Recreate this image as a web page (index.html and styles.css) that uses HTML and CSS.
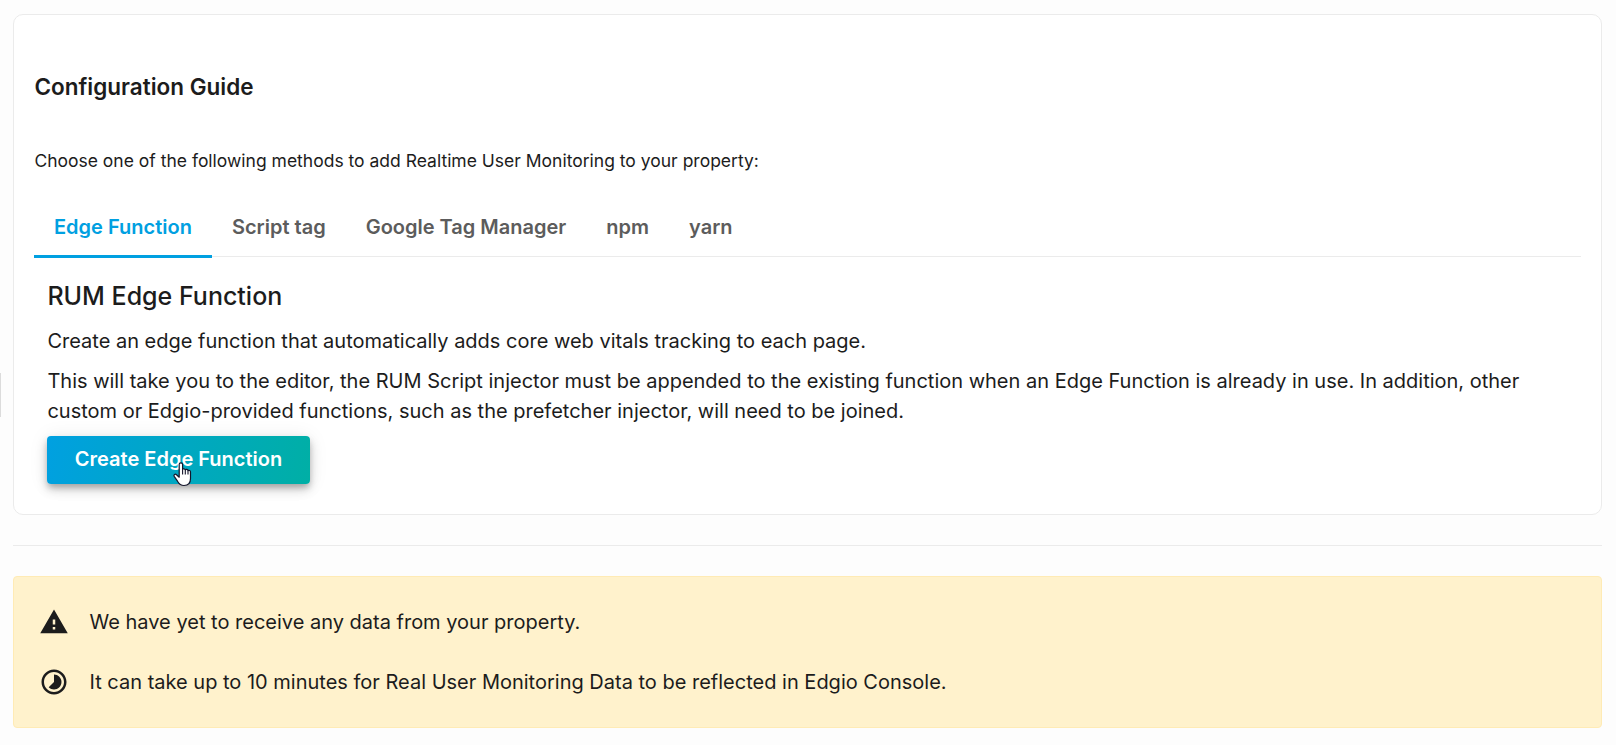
FILE: index.html
```html
<!DOCTYPE html>
<html lang="en">
<head>
<meta charset="utf-8">
<title>Configuration Guide</title>
<link rel="stylesheet" href="styles.css">
</head>
<body>
<span class="drawer-handle"></span>
<main class="page">
  <section class="card">
    <h2 class="card-title"><span>Configuration Guide</span></h2>
    <p class="card-intro"><span>Choose one of the following methods to add Realtime User Monitoring to your property:</span></p>
    <nav class="tabs">
      <a class="tab tab-active"><span>Edge Function</span></a>
      <a class="tab"><span>Script tag</span></a>
      <a class="tab"><span>Google Tag Manager</span></a>
      <a class="tab"><span>npm</span></a>
      <a class="tab"><span>yarn</span></a>
    </nav>
    <div class="panel">
      <h3 class="panel-title"><span>RUM Edge Function</span></h3>
      <p class="text"><span>Create an edge function that automatically adds core web vitals tracking to each page.</span></p>
      <p class="text"><span>This will take you to the editor, the RUM Script injector must be appended to the existing function when an Edge Function is already in use. In addition, other<br>custom or Edgio-provided functions, such as the prefetcher injector, will need to be joined.</span></p>
      <button class="button"><span>Create Edge Function</span>
        <svg class="cursor" width="19" height="25" viewBox="0 0 19 25"><path d="M6.2 12.6V2.6a1.7 1.7 0 0 1 3.4 0V7.4c.3-.8 2.4-.8 2.7.5c.6-.8 2.5-.6 2.7.7c.8-.6 2.5-.2 2.5 1.4V16.500c0 4-2 7-6.500 7c-3.500 0-5-1.600-6.500-4.300L1.200 14.300c-.8-1.500 1-2.700 2.300-1.600L6.200 15.200z" fill="#fff" stroke="#15152b" stroke-width="1.2" stroke-linejoin="round"/><path d="M9.600 7.500V12.500M12.300 8V12.500M15 8.700V12.500" fill="none" stroke="#15152b" stroke-width="1.100"/></svg>
      </button>
    </div>
  </section>
  <hr class="divider">
  <section class="alert">
    <div class="alert-row">
      <svg class="icon" viewBox="0 0 24 24"><path d="M1 21h22L12 2 1 21zm12-3h-2v-2h2v2zm0-4h-2v-4h2v4z"/></svg>
      <p class="alert-text"><span>We have yet to receive any data from your property.</span></p>
    </div>
    <div class="alert-row">
      <svg class="icon" viewBox="0 0 24 24"><path d="M16.240 7.760C15.070 6.590 13.540 6 12 6v6l-4.240 4.240c2.340 2.340 6.140 2.340 8.490 0 2.340-2.340 2.340-6.140-.01-8.480zM12 2C6.480 2 2 6.480 2 12s4.480 10 10 10 10-4.480 10-10S17.520 2 12 2zm0 18c-4.420 0-8-3.580-8-8s3.580-8 8-8 8 3.580 8 8-3.580 8-8 8z"/></svg>
      <p class="alert-text"><span>It can take up to 10 minutes for Real User Monitoring Data to be reflected in Edgio Console.</span></p>
    </div>
  </section>
</main>
</body>
</html>
```
FILE: styles.css
```css
* { box-sizing: border-box; }
body {
  margin: 0;
  background: #fdfdfd;
  color: #1c1c1c;
  font-family: Inter, "Liberation Sans", sans-serif;
}
h2, h3, p { margin: 0; }
.drawer-handle {
  position: absolute;
  left: 0;
  top: 373px;
  width: 1px;
  height: 44px;
  background: #dcdcdc;
}
.page { padding: 14px 14px 17px 13px; }
.card {
  height: 501px;
  padding: 57px 20px 0;
  background: #fff;
  border: 1px solid #ebebeb;
  border-radius: 10px;
}
.card-title {
  padding-left: 0.4px;
  font-size: 22.5px;
  line-height: 30px;
  font-weight: 600;
}
.card-intro {
  margin-top: 47px;
  padding-left: 0.4px;
  font-size: 17.5px;
  line-height: 24px;
  font-weight: 400;
}
.tabs {
  display: flex;
  height: 84px;
  border-bottom: 1px solid #ebebeb;
}
.tab {
  display: flex;
  align-items: flex-end;
  padding: 0 20px 17px;
  height: 85px;
  color: #5c5c5c;
  font-size: 20px;
  line-height: 28px;
  font-weight: 600;
}
.tab-active {
  color: #00a0e1;
  border-bottom: 3px solid #00a0e1;
  padding-bottom: 14px;
}
.panel { padding: 19px 13px 0; }
.panel-title {
  margin-bottom: 10px;
  padding-left: 0.4px;
  font-size: 25px;
  line-height: 40px;
  font-weight: 500;
}
.text {
  margin-bottom: 10px;
  padding-left: 0.4px;
  font-size: 20px;
  line-height: 30px;
  font-weight: 400;
}
.button {
  position: relative;
  display: block;
  width: 263px;
  height: 48px;
  padding: 0 0 2px;
  border: 0;
  border-radius: 4px;
  background: linear-gradient(102deg, #00a0e1, #00afa5);
  box-shadow: 0 4px 6px -1px rgba(0, 0, 0, 0.25), 0 6px 12px rgba(0, 0, 0, 0.14), 0 1px 20px rgba(0, 0, 0, 0.08);
  color: #fff;
  font: 600 20px/28px Inter, sans-serif;
}
.cursor { position: absolute; left: 126px; top: 26px; }
.divider {
  height: 1px;
  margin: 30px 0;
  border: 0;
  background: #ebebeb;
}
.alert {
  height: 152px;
  padding: 30px 26px;
  background: #fff2cc;
  border: 1px solid #ffebb5;
  border-radius: 4px;
}
.alert-row {
  display: flex;
  align-items: center;
  gap: 20.5px;
  height: 30px;
  margin-bottom: 30px;
}
.icon { width: 30px; height: 30px; margin-left: -1px; fill: #1c1c1c; }
.alert-text {
  font-size: 20px;
  line-height: 30px;
  font-weight: 400;
}
```
